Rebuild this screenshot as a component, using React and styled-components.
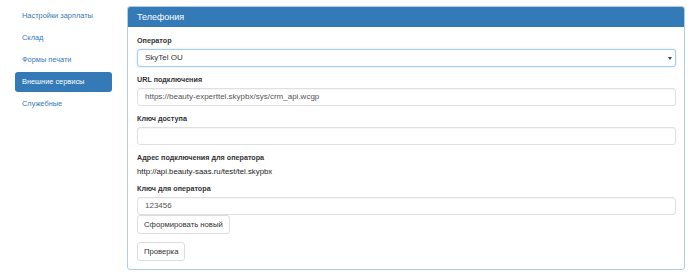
import React from 'react'
import styled, { createGlobalStyle } from 'styled-components'

const GlobalStyle = createGlobalStyle`
  body {
    margin: 0;
    background: #fff;
    font-family: "Liberation Sans", Arial, sans-serif;
    color: #333;
  }
`

const Page = styled.div`
  display: flex;
  align-items: flex-start;
  padding-top: 6px;
  width: 700px;
  height: 280px;
  box-sizing: border-box;
`

const Sidebar = styled.ul`
  list-style: none;
  margin: 0;
  padding: 0 0 0 15px;
  width: 97px;
  flex: none;
`

const NavItem = styled.li`
  height: 20px;
  line-height: 20px;
  margin-bottom: 2px;
  padding: 0 7px;
  font-size: 7.4px;
  border-radius: 3px;
  color: ${props => props.active ? '#fff' : '#337ab7'};
  background: ${props => props.active ? '#337ab7' : 'transparent'};
  white-space: nowrap;
`

const Panel = styled.div`
  margin-left: 15px;
  width: 558px;
  box-sizing: border-box;
  border: 1px solid #b3cce6;
  border-radius: 3px;
  background: #fff;
`

const PanelHeading = styled.div`
  height: 20px;
  line-height: 20px;
  padding: 0 9px;
  background: #337ab7;
  color: #fff;
  font-size: 9px;
  border-radius: 2px 2px 0 0;
`

const PanelBody = styled.div`
  padding: 8px 8px 8px 9px;
`

const Group = styled.div`
  margin-bottom: ${props => props.mb ?? 7}px;
`

const Label = styled.div`
  font-size: 7.2px;
  font-weight: bold;
  line-height: 11px;
  margin-bottom: 3px;
  color: #333;
`

const Control = styled.div`
  position: relative;
  height: 18px;
  box-sizing: border-box;
  border: 1px solid ${props => props.focus ? '#a9cdef' : '#e0e0e0'};
  border-radius: 3px;
  padding: 0 7px;
  line-height: 16px;
  font-size: 8px;
  color: ${props => props.focus ? '#333' : '#555'};
  background: #fff;
  box-shadow: ${props => props.focus ? '0 0 2px rgba(102, 175, 233, 0.4)' : 'inset 0 1px 1px rgba(0,0,0,0.04)'};
  white-space: nowrap;
`

const Caret = styled.span`
  position: absolute;
  right: 3px;
  top: 7px;
  width: 0;
  height: 0;
  border-left: 2px solid transparent;
  border-right: 2px solid transparent;
  border-top: 3px solid #444;
`

const StaticText = styled.div`
  margin-top: 2px;
  font-size: 7.8px;
  line-height: 12px;
  color: #222;
`

const Button = styled.button`
  display: block;
  height: 19px;
  padding: 0 6px;
  margin-top: ${props => props.mt || 0}px;
  font-family: inherit;
  font-size: 7.7px;
  color: #333;
  background: #fff;
  border: 1px solid #ddd;
  border-radius: 3px;
`

const menu = ['Настройки зарплаты', 'Склад', 'Формы печати', 'Внешние сервисы', 'Служебные']

export default function App () {
  return (
    <Page>
      <GlobalStyle />
      <Sidebar>
        {menu.map(item => (
          <NavItem key={item} active={item === 'Внешние сервисы'}>{item}</NavItem>
        ))}
      </Sidebar>
      <Panel>
        <PanelHeading>Телефония</PanelHeading>
        <PanelBody>
          <Group>
            <Label>Оператор</Label>
            <Control focus>SkyTel OU<Caret /></Control>
          </Group>
          <Group>
            <Label>URL подключения</Label>
            <Control>https://beauty-experttel.skypbx/sys/crm_api.wcgp</Control>
          </Group>
          <Group>
            <Label>Ключ доступа</Label>
            <Control />
          </Group>
          <Group mb={5}>
            <Label>Адрес подключения для оператора</Label>
            <StaticText>http://api.beauty-saas.ru/test/tel.skypbx</StaticText>
          </Group>
          <Group mb={0}>
            <Label>Ключ для оператора</Label>
            <Control>123456</Control>
            <Button>Сформировать новый</Button>
          </Group>
          <Button mt={8}>Проверка</Button>
        </PanelBody>
      </Panel>
    </Page>
  )
}
